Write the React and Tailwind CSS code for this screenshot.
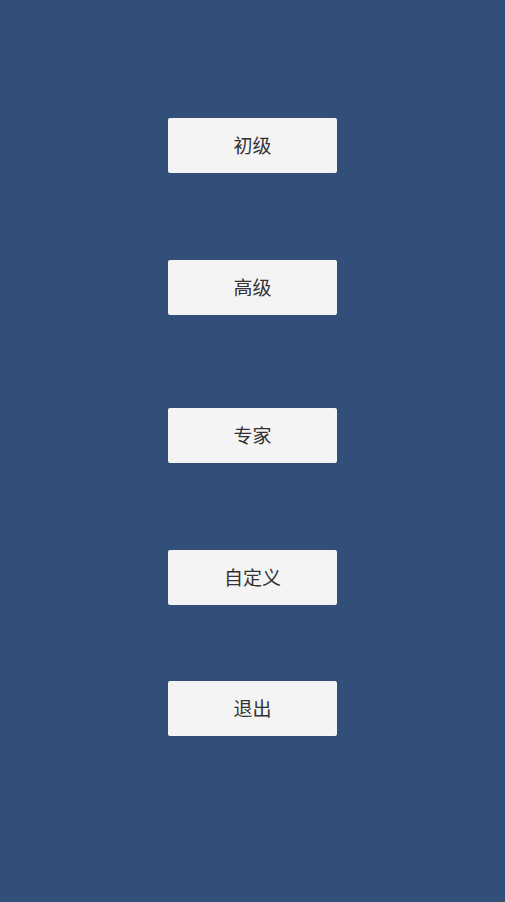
export default function App() {
  const buttons = [
    { label: '初级', mt: 'mt-0' },
    { label: '高级', mt: 'mt-[87px]' },
    { label: '专家', mt: 'mt-[93px]' },
    { label: '自定义', mt: 'mt-[87px]' },
    { label: '退出', mt: 'mt-[76px]' },
  ];

  return (
    <div
      className="w-[505px] h-[902px] bg-[#324f7a] flex flex-col items-center pt-[118px]"
      style={{ fontFamily: '"Noto Sans", "Noto Sans CJK SC", sans-serif' }}
    >
      {buttons.map((b) => (
        <button
          key={b.label}
          className={`${b.mt} w-[169px] h-[55px] rounded-[2px] bg-[#f4f4f4] text-[#323232] text-[19px] pt-[2px] flex items-center justify-center`}
        >
          {b.label}
        </button>
      ))}
    </div>
  );
}
